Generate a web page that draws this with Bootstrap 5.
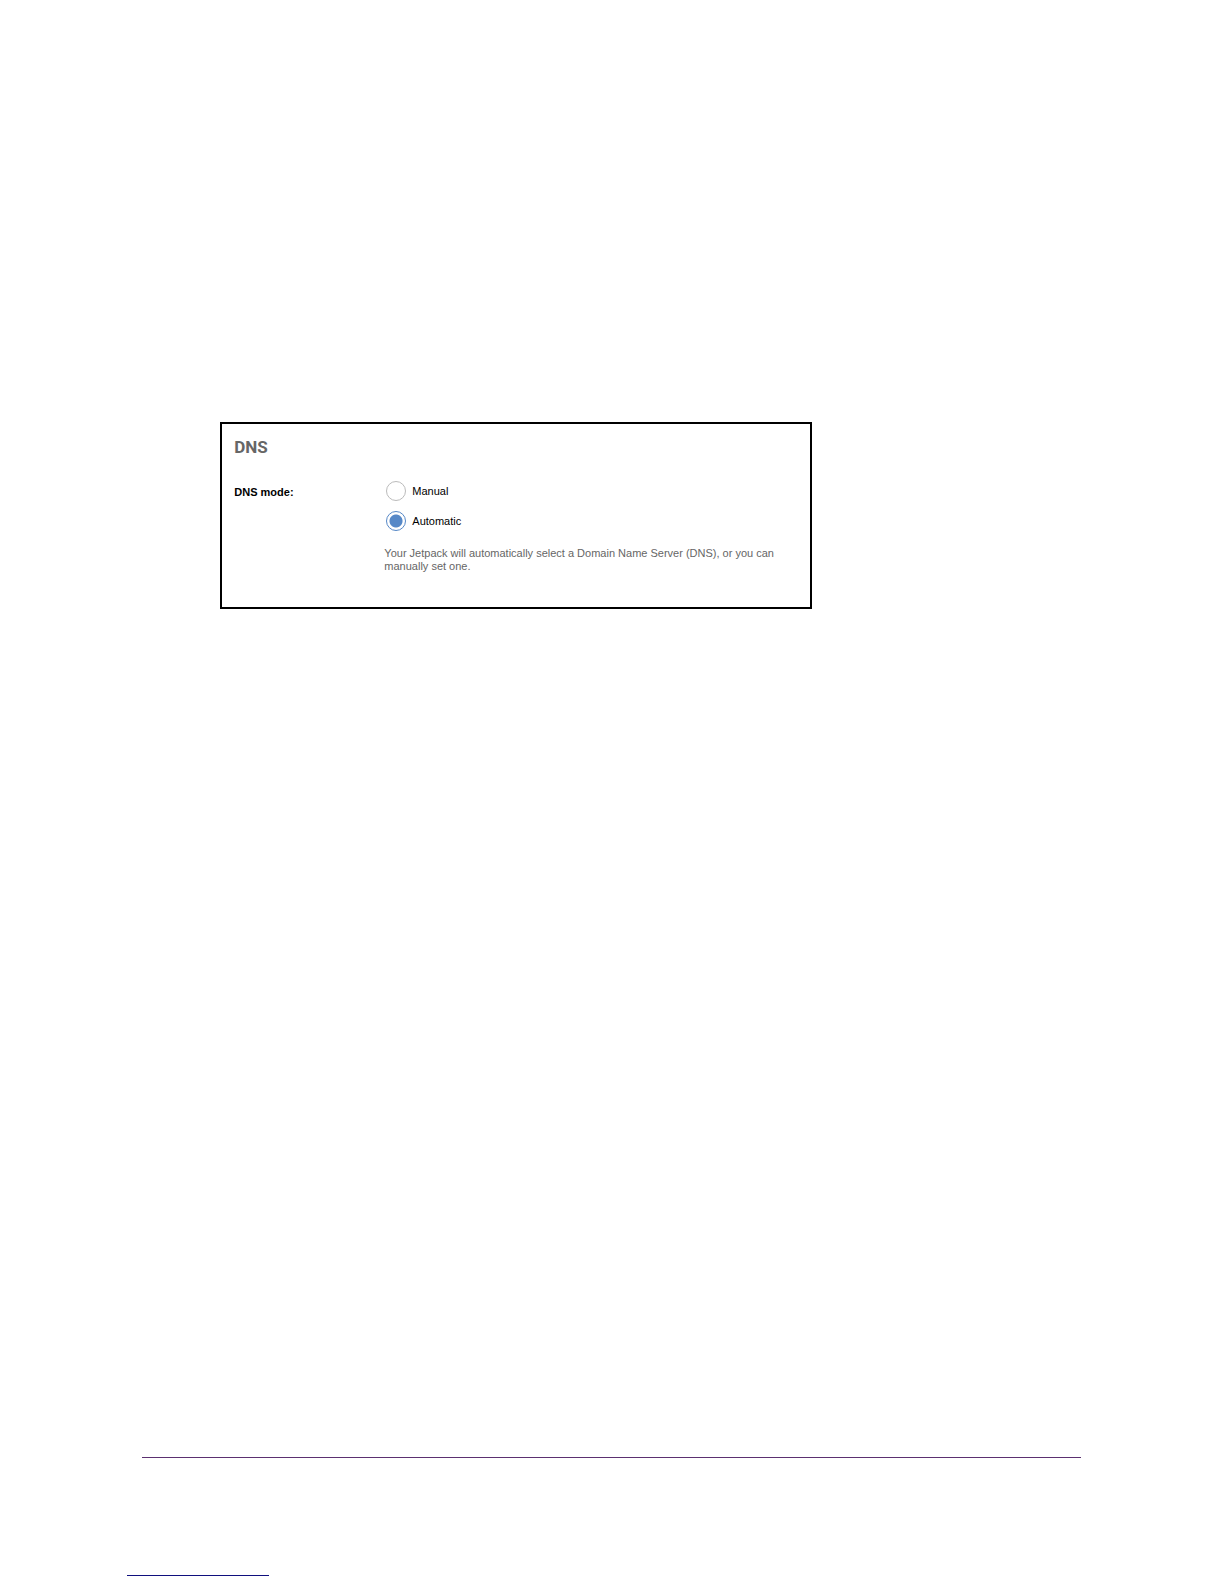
<!DOCTYPE html>
<html lang="en">
<head>
    <meta charset="UTF-8">
    <meta name="viewport" content="width=device-width, initial-scale=1.0">
    <title>DNS</title>
    <link rel="stylesheet" href="https://cdn.jsdelivr.net/npm/bootstrap@5.3.0/dist/css/bootstrap.min.css">
    <style>
        body {
            background-color: #fff;
            color: #000;
            font-family: "Liberation Sans", Arial, sans-serif;
            font-size: 11px;
            line-height: 13px;
        }
        main {
            padding: 422px 33.7% 40px 18%;
        }
        .dns-panel {
            border: 2px solid #000;
            padding: 13px 12px 34px;
        }
        .dns-title {
            color: #666;
            font-family: Roboto, sans-serif;
            font-size: 17px;
            font-weight: 700;
            line-height: 20px;
            margin-bottom: 24px;
        }
        .dns-legend {
            flex: 0 0 150px;
            padding-top: 5px;
        }
        .dns-option {
            display: flex;
            align-items: center;
            gap: 6px;
            min-height: 0;
            margin: 0 0 10px 2px;
            padding: 0;
        }
        .dns-option .form-check-input {
            float: none;
            width: 20px;
            height: 20px;
            margin: 0;
            border-color: #bbb;
        }
        .dns-option .form-check-input:checked {
            background: radial-gradient(circle, #5688c7 6px, #fff 7px);
            border-color: #5688c7;
        }
        .dns-help {
            color: #666;
            margin: 16px 0 0;
        }
        .page-rule {
            height: 1px;
            margin: 0 11.7% 117px 11.6%;
            background-color: #5b3070;
        }
        .note-rule {
            width: 142px;
            height: 1px;
            margin: 0 0 8px 127px;
            background-color: #10107e;
        }
    </style>
</head>
<body class="d-flex flex-column min-vh-100">
    <main>
        <form class="dns-panel">
            <h1 class="dns-title">DNS</h1>
            <div class="d-flex" role="radiogroup" aria-labelledby="dnsMode">
                <div id="dnsMode" class="dns-legend fw-bold">DNS mode:</div>
                <div>
                    <div class="form-check dns-option">
                        <input class="form-check-input" type="radio" name="dns_mode" id="dnsManual" value="manual">
                        <label class="form-check-label" for="dnsManual">Manual</label>
                    </div>
                    <div class="form-check dns-option">
                        <input class="form-check-input" type="radio" name="dns_mode" id="dnsAutomatic" value="automatic" checked>
                        <label class="form-check-label" for="dnsAutomatic">Automatic</label>
                    </div>
                    <p class="dns-help">Your Jetpack will automatically select a Domain Name Server (DNS), or you can manually set one.</p>
                </div>
            </div>
        </form>
    </main>

    <footer class="mt-auto">
        <div class="page-rule"></div>
        <div class="note-rule"></div>
    </footer>

    <script src="https://cdn.jsdelivr.net/npm/bootstrap@5.3.0/dist/js/bootstrap.bundle.min.js"></script>
</body>
</html>
